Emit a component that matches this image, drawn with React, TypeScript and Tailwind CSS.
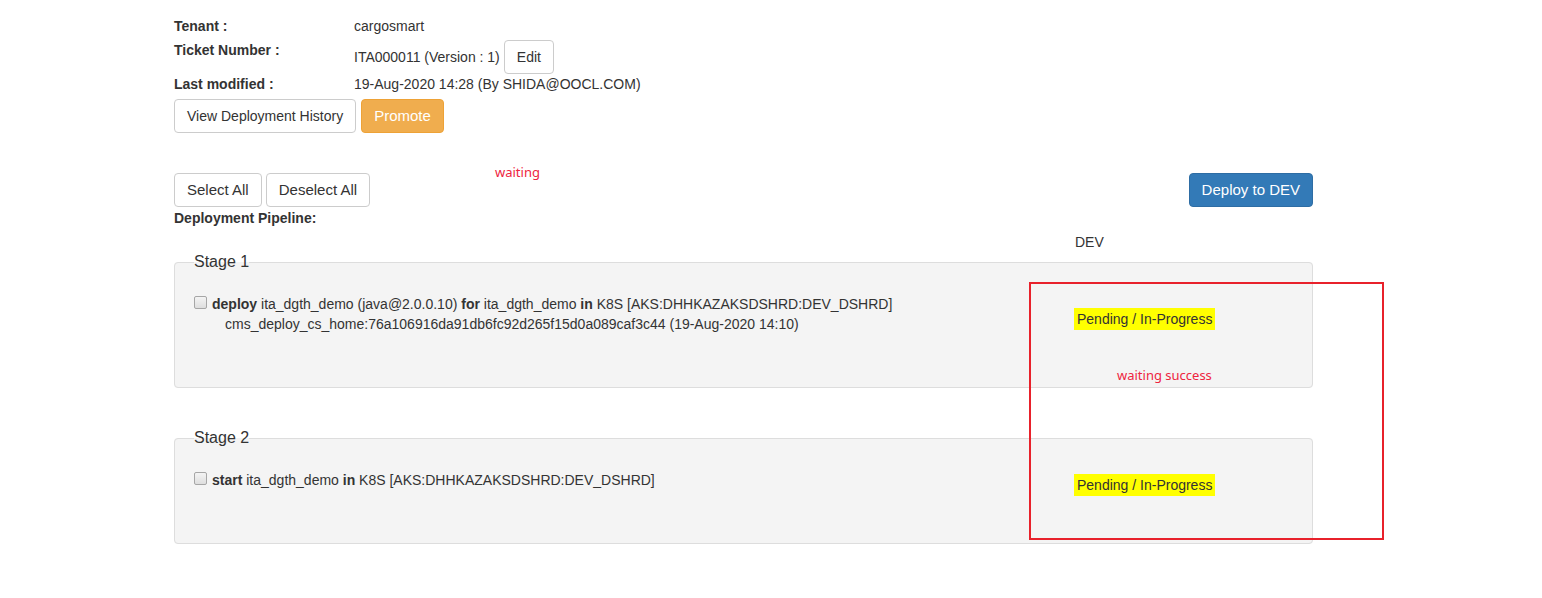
import React from "react";

const btn =
  "h-[34px] rounded-[4px] border px-[12px] leading-[32px] whitespace-nowrap";

function Checkbox() {
  return (
    <span className="mt-[2px] inline-block h-[13px] w-[13px] shrink-0 rounded-[2px] border border-[#a6a6a6] bg-gradient-to-b from-[#f4f4f4] to-[#dedede]" />
  );
}

function Badge() {
  return (
    <span className="-mb-[6px] mt-[4px] inline-block bg-[#ffff00] px-[3px] text-[14px] leading-[22px] text-[#333]">
      Pending / In-Progress
    </span>
  );
}

function Stage({
  title,
  children,
}: {
  title: string;
  children: React.ReactNode;
}) {
  return (
    <fieldset className="rounded-[4px] border border-[#dddddd] bg-[#f4f4f4] pb-[53px] pl-[19px]">
      <legend className="text-[16px] leading-[22px] text-[#333]">{title}</legend>
      <div className="mt-[21px] flex items-center">
        <div className="flex flex-1 items-start gap-[5px]">
          <Checkbox />
          <div className="text-[14px] leading-[20px] text-[#333]">{children}</div>
        </div>
        <div className="flex w-[238px] items-center">
          <Badge />
        </div>
      </div>
    </fieldset>
  );
}

export default function App() {
  return (
    <div
      className="relative min-h-[598px] w-full bg-white text-[#333]"
      style={{ fontFamily: '"Liberation Sans", Arial, sans-serif' }}
    >
      <div className="ml-[174px] w-[1139px] pt-[16px]">
        {/* Ticket info */}
        <div className="grid grid-cols-[180px_1fr]">
          <div className="text-[14px] font-bold leading-[20px]">Tenant :</div>
          <div className="text-[14px] leading-[20px]">cargosmart</div>

          <div className="mt-[4px] text-[14px] font-bold leading-[20px]">Ticket Number :</div>
          <div className="mt-[4px] flex items-center gap-[4px] text-[14px]">
            <span>ITA000011 (Version : 1)</span>
            <button className={`${btn} border-[#cccccc] bg-white text-[14px] text-[#333]`}>
              Edit
            </button>
          </div>

          <div className="text-[14px] font-bold leading-[20px]">Last modified :</div>
          <div className="text-[14px] leading-[20px]">
            19-Aug-2020 14:28 (By SHIDA@OOCL.COM)
          </div>
        </div>

        <div className="mt-[5px] flex gap-[5px]">
          <button className={`${btn} border-[#cccccc] bg-white text-[14px] text-[#333]`}>
            View Deployment History
          </button>
          <button className={`${btn} border-[#eea236] bg-[#f0ad4e] text-[15px] text-white`}>
            Promote
          </button>
        </div>

        {/* Pipeline toolbar */}
        <div className="mt-[40px] flex items-center justify-between">
          <div className="flex gap-[4px]">
            <button className={`${btn} border-[#cccccc] bg-white text-[15px] text-[#333]`}>
              Select All
            </button>
            <button className={`${btn} border-[#cccccc] bg-white text-[15px] text-[#333]`}>
              Deselect All
            </button>
          </div>
          <button className={`${btn} border-[#2e6da4] bg-[#337ab7] text-[15px] text-white`}>
            Deploy to DEV
          </button>
        </div>
        <div className="mt-[1px] text-[14px] font-bold leading-[20px]">Deployment Pipeline:</div>
        <div className="flex">
          <div className="flex-1" />
          <div className="mt-[4px] w-[238px] text-[14px] leading-[20px]">DEV</div>
        </div>

        <div className="-mt-[1px]">
          <Stage title="Stage 1">
            <div>
              <b>deploy</b> ita_dgth_demo (java@2.0.0.10) <b>for</b> ita_dgth_demo{" "}
              <b>in</b> K8S [AKS:DHHKAZAKSDSHRD:DEV_DSHRD]
            </div>
            <div className="pl-[13px]">
              cms_deploy_cs_home:76a106916da91db6fc92d265f15d0a089caf3c44 (19-Aug-2020 14:10)
            </div>
          </Stage>
        </div>
        <div className="mt-[39px]">
          <Stage title="Stage 2">
            <div>
              <b>start</b> ita_dgth_demo <b>in</b> K8S [AKS:DHHKAZAKSDSHRD:DEV_DSHRD]
            </div>
          </Stage>
        </div>
      </div>

      {/* Red annotations over the page */}
      <span
        className="absolute left-[495px] top-[163px] text-[13px] leading-[18px] text-[#ee2440]"
        style={{ fontFamily: '"Noto Sans", "Noto Sans CJK SC", sans-serif' }}
      >
        waiting
      </span>
      <span
        className="absolute left-[1117px] top-[366px] text-[13px] leading-[18px] text-[#ee2440]"
        style={{ fontFamily: '"Noto Sans", "Noto Sans CJK SC", sans-serif' }}
      >
        waiting success
      </span>
      <div className="pointer-events-none absolute left-[1029px] top-[282px] h-[258px] w-[355px] border-2 border-[#e8212b]" />
    </div>
  );
}
